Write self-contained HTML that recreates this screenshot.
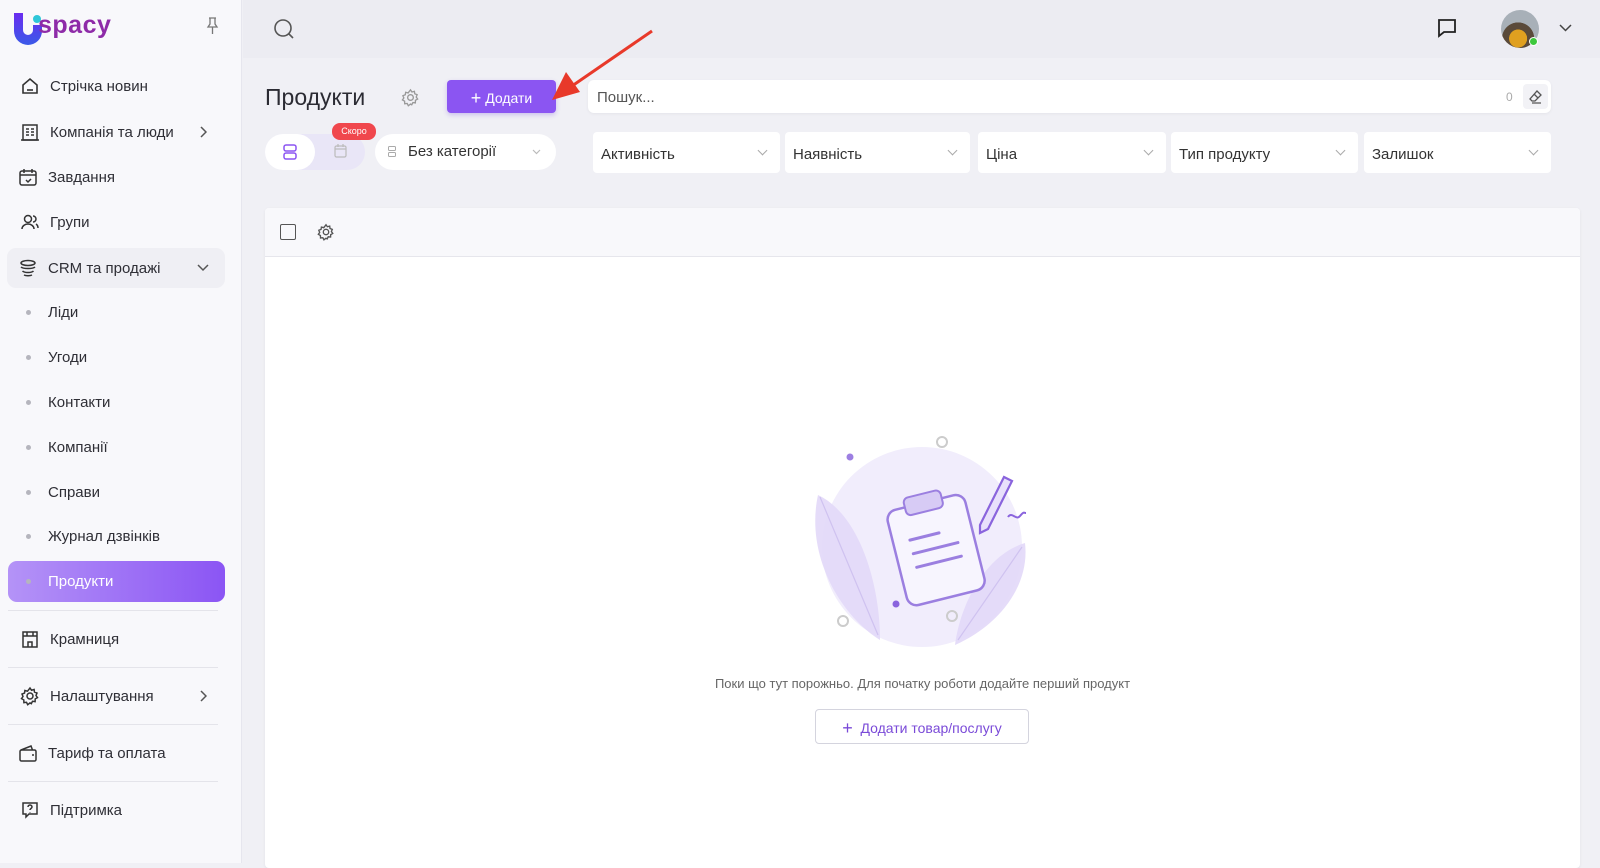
<!DOCTYPE html>
<html><head><meta charset="utf-8"><style>
*{box-sizing:border-box;margin:0;padding:0}
body{width:1600px;height:863px;overflow:hidden;background:#f0f0f5;font-family:"Liberation Sans",sans-serif;color:#2b2b33;position:relative}
.sb{position:absolute;left:0;top:0;width:242px;height:863px;background:#f8f8fb;border-right:1px solid #e6e6ee}
.it{position:absolute;left:20px;height:20px;display:flex;align-items:center;font-size:15px;color:#2f2f36}
.it svg{width:20px;height:20px;margin-right:10px;flex:none}
.sub{position:absolute;left:26px;font-size:15px;color:#2f2f36;display:flex;align-items:center}
.sub:before{content:"";width:5px;height:5px;border-radius:50%;background:#b5b5bd;margin-right:17px}
.hr{position:absolute;left:8px;width:210px;height:1px;background:#e4e4ea}
.top{position:absolute;left:243px;top:0;right:0;height:58px;background:#ececf2}
.box{position:absolute;background:#fff;border-radius:6px}
.flt{position:absolute;top:132px;height:41px;background:#fff;border-radius:4px;font-size:15px;color:#333;padding:14px 8px}
.flt:after{content:"";position:absolute;right:14px;top:15px;width:6px;height:6px;border-right:1.3px solid #aaa;border-bottom:1.3px solid #aaa;transform:rotate(45deg)}
</style></head><body>
<div class="sb">
 <svg style="position:absolute;left:13px;top:11px" width="30" height="34" viewBox="0 0 30 34"><defs><linearGradient id="lg" x1="0" y1="0" x2="0" y2="1"><stop offset="0" stop-color="#6a2cf0"/><stop offset="1" stop-color="#3a5ae8"/></linearGradient></defs><path d="M1 2h9v17a5 5 0 0010 0V14h9v6a14 14 0 01-28 0z" fill="url(#lg)"/><circle cx="24" cy="8" r="4" fill="#2ec6d8"/></svg>
 <div style="position:absolute;left:38px;top:11px;font-size:25px;font-weight:bold;color:#8e2ba8;letter-spacing:0.5px">spacy</div>
 <svg style="position:absolute;left:206px;top:17px" width="13" height="18" viewBox="0 0 13 18" fill="none" stroke="#777" stroke-width="1.3"><path d="M3 1h7M4 1v6L2 10h9L9 7V1M6.5 10v7"/></svg>

 <div class="it" style="top:76px"><svg viewBox="0 0 20 20" fill="none" stroke="#333" stroke-width="1.6"><path d="M3 9l7-6 7 6v8H3z"/><path d="M7 14h6"/></svg>Стрічка новин</div>
 <div class="it" style="top:122px"><svg viewBox="0 0 20 20" fill="none" stroke="#333" stroke-width="1.5"><rect x="3" y="3" width="14" height="15"/><path d="M6 7h3M11 7h3M6 10h3M11 10h3M6 13h3M11 13h3M1 18h18"/></svg>Компанія та люди</div>
 <svg style="position:absolute;left:200px;top:126px" width="7" height="12" viewBox="0 0 7 12" fill="none" stroke="#555" stroke-width="1.5"><path d="M1 1l5 5-5 5"/></svg>
 <div class="it" style="top:167px;left:18px"><svg viewBox="0 0 20 20" fill="none" stroke="#333" stroke-width="1.5"><rect x="2" y="4" width="16" height="14" rx="2"/><path d="M2 8h16M6 2v4M14 2v4M8 13l2 2 3-3"/></svg>Завдання</div>
 <div class="it" style="top:212px"><svg viewBox="0 0 20 20" fill="none" stroke="#333" stroke-width="1.5"><circle cx="8" cy="7" r="3.5"/><path d="M2 17c0-3 3-5 6-5s6 2 6 5M13 4a3 3 0 010 6M16 12c1.5 1 2 3 2 4"/></svg>Групи</div>
 <div style="position:absolute;left:7px;top:248px;width:218px;height:40px;background:#efeff4;border-radius:9px"></div>
 <div class="it" style="top:258px;left:18px"><svg viewBox="0 0 20 20" fill="none" stroke="#333" stroke-width="1.5"><ellipse cx="10" cy="5" rx="7" ry="2.5"/><path d="M3 9c2 2 12 2 14 0M4.5 13c2 2 9 2 11 0M6 17c2 1 6 1 8 0"/></svg>CRM та продажі</div>
 <svg style="position:absolute;left:197px;top:264px" width="12" height="8" viewBox="0 0 12 8" fill="none" stroke="#555" stroke-width="1.5"><path d="M1 1l5 5 5-5"/></svg>
 <div class="sub" style="top:304px">Ліди</div>
 <div class="sub" style="top:349px">Угоди</div>
 <div class="sub" style="top:394px">Контакти</div>
 <div class="sub" style="top:439px">Компанії</div>
 <div class="sub" style="top:484px">Справи</div>
 <div class="sub" style="top:528px">Журнал дзвінків</div>
 <div style="position:absolute;left:8px;top:561px;width:217px;height:41px;border-radius:9px;background:linear-gradient(90deg,#b493f7,#8b55f4)"></div>
 <div class="sub" style="top:573px;color:#fff">Продукти</div>
 <div class="hr" style="top:610px"></div>
 <div class="it" style="top:629px"><svg viewBox="0 0 20 20" fill="none" stroke="#333" stroke-width="1.5"><rect x="3" y="3" width="14" height="15"/><path d="M3 7h14M8 18v-5h4v5M7 3v4M13 3v4"/></svg>Крамниця</div>
 <div class="hr" style="top:667px"></div>
 <div class="it" style="top:686px"><svg viewBox="0 0 20 20" fill="none" stroke="#333" stroke-width="1.5"><circle cx="10" cy="10" r="3"/><path d="M10 2l1.5 2.2 2.6-.7.4 2.6 2.5 1-1 2.4 1.5 2.1-2.3 1.3-.1 2.7-2.6-.3-1.2 2.4L10 16.9l-2.3 1.8-1.2-2.4-2.6.3-.1-2.7L1.5 12.6 3 10.5 2 8.1l2.5-1 .4-2.6 2.6.7z"/></svg>Налаштування</div>
 <svg style="position:absolute;left:200px;top:690px" width="7" height="12" viewBox="0 0 7 12" fill="none" stroke="#555" stroke-width="1.5"><path d="M1 1l5 5-5 5"/></svg>
 <div class="hr" style="top:724px"></div>
 <div class="it" style="top:743px;left:18px"><svg viewBox="0 0 20 20" fill="none" stroke="#333" stroke-width="1.5"><rect x="2" y="7" width="16" height="11" rx="1.5"/><path d="M3 7l10-4 1.5 4M14 12h2"/></svg>Тариф та оплата</div>
 <div class="hr" style="top:781px"></div>
 <div class="it" style="top:800px"><svg viewBox="0 0 20 20" fill="none" stroke="#333" stroke-width="1.5"><path d="M3 3h14v11H9l-3 3v-3H3z"/><path d="M8 7a2 2 0 114 0c0 1.5-2 1.5-2 3M10 12v.5"/></svg>Підтримка</div>
</div>

<div class="top"></div>
<svg style="position:absolute;left:273px;top:18px" width="22" height="22" viewBox="0 0 22 22" fill="none" stroke="#555" stroke-width="1.6"><circle cx="10" cy="10" r="8"/><path d="M16 16l4 4"/></svg>
<svg style="position:absolute;left:1436px;top:17px" width="22" height="22" viewBox="0 0 22 22" fill="none" stroke="#222" stroke-width="1.8"><path d="M3 3h16v12H8l-5 4z"/></svg>
<div style="position:absolute;left:1501px;top:10px;width:38px;height:38px;border-radius:50%;background:radial-gradient(circle at 45% 75%,#e0a020 0 25%,#5a4a3a 26% 45%,#a8b0b8 46%)"></div>
<div style="position:absolute;left:1529px;top:37px;width:9px;height:9px;border-radius:50%;background:#3cc83c;border:1.5px solid #fff"></div>
<svg style="position:absolute;left:1559px;top:24px" width="13" height="8" viewBox="0 0 13 8" fill="none" stroke="#444" stroke-width="1.5"><path d="M1 1l5.5 5.5L12 1"/></svg>

<div style="position:absolute;left:265px;top:84px;font-size:23px;color:#2b2b33">Продукти</div>
<svg style="position:absolute;left:401px;top:88px" width="19" height="19" viewBox="0 0 20 20" fill="none" stroke="#999" stroke-width="1.4"><circle cx="10" cy="10" r="3"/><path d="M10 2l1.5 2.2 2.6-.7.4 2.6 2.5 1-1 2.4 1.5 2.1-2.3 1.3-.1 2.7-2.6-.3-1.2 2.4L10 16.9l-2.3 1.8-1.2-2.4-2.6.3-.1-2.7L1.5 12.6 3 10.5 2 8.1l2.5-1 .4-2.6 2.6.7z"/></svg>
<div style="position:absolute;left:447px;top:80px;width:109px;height:33px;background:#8b55f2;border-radius:4px;color:#fff;font-size:14px;padding-top:8px;text-align:center;box-shadow:0 2px 5px rgba(120,80,220,.3)"><span style="font-size:18px;vertical-align:-1px">+</span> Додати</div>
<svg style="position:absolute;left:550px;top:28px" width="106" height="78" viewBox="0 0 106 78"><path d="M102 3L22 58" stroke="#e8392a" stroke-width="3"/><path d="M2 72L16 44 30 64z" fill="#e8392a"/></svg>
<div class="box" style="left:588px;top:80px;width:963px;height:33px;box-shadow:0 1px 3px rgba(0,0,0,.05)"></div>
<div style="position:absolute;left:597px;top:89px;font-size:15px;color:#555">Пошук...</div>
<div style="position:absolute;left:1506px;top:90px;font-size:12px;color:#aaa">0</div>
<div style="position:absolute;left:1523px;top:84px;width:25px;height:25px;background:#f2f2f6;border-radius:4px"></div>
<svg style="position:absolute;left:1528px;top:89px" width="15" height="15" viewBox="0 0 15 15" fill="none" stroke="#555" stroke-width="1.3"><path d="M9 2l4 4-6 6H4L2 10z M6 5l4 4M4 14h9"/></svg>

<div style="position:absolute;left:265px;top:134px;width:100px;height:36px;border-radius:18px;background:#e9e6f7"></div>
<div style="position:absolute;left:265px;top:134px;width:50px;height:36px;border-radius:18px;background:#fff"></div>
<svg style="position:absolute;left:283px;top:144px" width="14" height="16" viewBox="0 0 14 16" fill="none" stroke="#8b55f2" stroke-width="1.5"><rect x="1" y="1" width="12" height="6" rx="2"/><rect x="1" y="9" width="12" height="6" rx="2"/></svg>
<svg style="position:absolute;left:334px;top:144px" width="13" height="14" viewBox="0 0 13 14" fill="none" stroke="#bbb" stroke-width="1.2"><rect x="1" y="2" width="11" height="11" rx="1.5"/><path d="M1 5h11M4 0v3M9 0v3"/></svg>
<div style="position:absolute;left:332px;top:123px;width:44px;height:17px;background:#f0474d;border-radius:8px;color:#fff;font-size:9px;text-align:center;line-height:17px">Скоро</div>
<div style="position:absolute;left:375px;top:134px;width:181px;height:36px;background:#fff;border-radius:18px"></div>
<svg style="position:absolute;left:388px;top:146px" width="8" height="11" viewBox="0 0 8 11" fill="none" stroke="#aaa" stroke-width="1"><rect x="0.5" y="0.5" width="7" height="4" rx="1"/><rect x="0.5" y="6.5" width="7" height="4" rx="1"/></svg>
<div style="position:absolute;left:408px;top:143px;font-size:15px;color:#333">Без категорії</div>
<svg style="position:absolute;left:532px;top:149px" width="9" height="6" viewBox="0 0 9 6" fill="none" stroke="#bbb" stroke-width="1.2"><path d="M1 1l3.5 3.5L8 1"/></svg>
<div class="flt" style="left:593px;width:187px">Активність</div>
<div class="flt" style="left:785px;width:185px">Наявність</div>
<div class="flt" style="left:978px;width:188px">Ціна</div>
<div class="flt" style="left:1171px;width:187px">Тип продукту</div>
<div class="flt" style="left:1364px;width:187px">Залишок</div>

<div style="position:absolute;left:265px;top:208px;width:1315px;height:660px;background:#fff;border-radius:4px;box-shadow:0 1px 3px rgba(0,0,0,.06)"></div>
<div style="position:absolute;left:265px;top:208px;width:1315px;height:49px;background:#f8f8fb;border-bottom:1px solid #e6e6ec;border-radius:4px 4px 0 0"></div>
<div style="position:absolute;left:280px;top:224px;width:16px;height:16px;border:1.5px solid #555;border-radius:2px"></div>
<svg style="position:absolute;left:317px;top:223px" width="18" height="18" viewBox="0 0 20 20" fill="none" stroke="#555" stroke-width="1.5"><circle cx="10" cy="10" r="3"/><path d="M10 2l1.5 2.2 2.6-.7.4 2.6 2.5 1-1 2.4 1.5 2.1-2.3 1.3-.1 2.7-2.6-.3-1.2 2.4L10 16.9l-2.3 1.8-1.2-2.4-2.6.3-.1-2.7L1.5 12.6 3 10.5 2 8.1l2.5-1 .4-2.6 2.6.7z"/></svg>

<svg style="position:absolute;left:800px;top:435px" width="240" height="220" viewBox="0 0 240 220">
 <circle cx="122" cy="112" r="100" fill="#f1edfc"/>
 <path d="M18 60C60 80 80 150 80 205C40 180 5 120 18 60z" fill="#e2d8f8" opacity=".9"/>
 <path d="M20 62L78 200" stroke="#cfc2f0" stroke-width="1.2"/>
 <path d="M225 108C185 120 160 170 155 210C200 190 230 150 225 108z" fill="#e2d8f8" opacity=".9"/>
 <path d="M222 112L158 205" stroke="#cfc2f0" stroke-width="1.2"/>
 <g transform="rotate(-14 140 110)"><rect x="95" y="65" width="80" height="98" rx="10" fill="#f7f5fe" stroke="#9b7fe0" stroke-width="2.5"/><rect x="115" y="56" width="38" height="18" rx="5" fill="#d7cbf5" stroke="#9b7fe0" stroke-width="2"/><path d="M112 98h30M112 112h46M112 126h46" stroke="#9b7fe0" stroke-width="3" stroke-linecap="round"/></g>
 <path d="M180 90L204 42l8 4-24 48-8 4z" fill="#e8e0fb" stroke="#8a64dd" stroke-width="2.2"/>
 <path d="M208 82c4-6 8 4 12-1s4-3 6-3" fill="none" stroke="#8a64dd" stroke-width="2"/>
 <circle cx="50" cy="22" r="3.5" fill="#9d7fe2"/><circle cx="142" cy="7" r="5" fill="none" stroke="#ccc" stroke-width="2"/>
 <circle cx="96" cy="169" r="3.5" fill="#8a64dd"/><circle cx="43" cy="186" r="5" fill="none" stroke="#ccc" stroke-width="2"/><circle cx="152" cy="181" r="5" fill="none" stroke="#ccc" stroke-width="2"/>
</svg>
<div style="position:absolute;left:0;width:1845px;top:676px;text-align:center;font-size:13px;color:#666">Поки що тут порожньо. Для початку роботи додайте перший продукт</div>
<div style="position:absolute;left:815px;top:709px;width:214px;height:35px;border:1.5px solid #d4d4de;border-radius:4px;font-size:14px;color:#7a4ad8;text-align:center;padding-top:8px"><span style="font-size:18px;vertical-align:-1px">+</span>&nbsp; Додати товар/послугу</div>
</body></html>
